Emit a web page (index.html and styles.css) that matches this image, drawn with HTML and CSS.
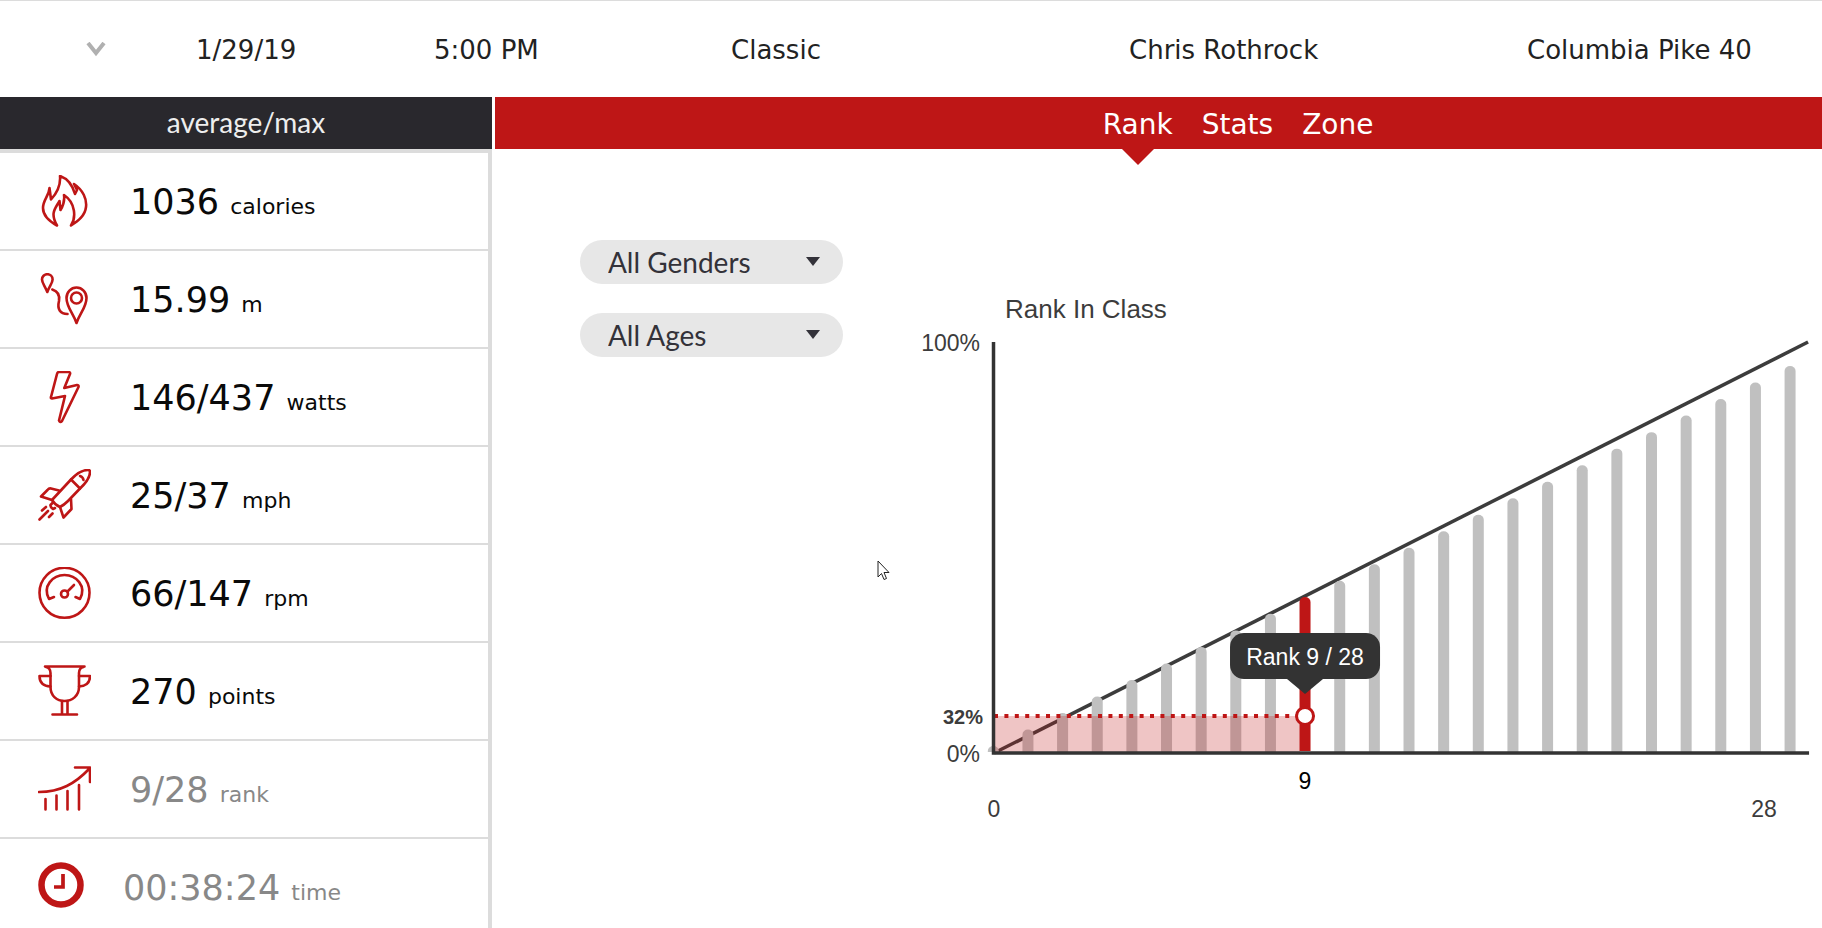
FILE: index.html
```
<!DOCTYPE html>
<html lang="en">
<head>
  <meta charset="UTF-8">
  <title>Class Results</title>
  <link rel="stylesheet" href="styles.css">
</head>
<body>
  <header class="class-info">
    <button class="toggle" aria-label="Collapse class">
      <svg width="20" height="16" viewBox="0 0 20 16"><path d="M2 1l8 10 8-10" /></svg>
    </button>
    <span>1/29/19</span>
    <span>5:00 PM</span>
    <span>Classic</span>
    <span>Chris Rothrock</span>
    <span>Columbia Pike 40</span>
  </header>

  <div class="layout">
    <aside class="sidebar">
      <h2 class="sidebar-title">average/max</h2>
      <ul class="metrics">
        <li>
          <svg class="icon" width="53" height="53" viewBox="0 0 53 53">
            <path d="M22 1C31 4 35 12 37 19L39 15L36 9C45 15 49 24 48 32C47 41 40 46 33 50.5C38 43 38 28 26 20C27 27 25 31 22.5 35L21.5 26C17 34 12 38 19 50.5C9 45 5 40 5 33C5 25 11 21 11.5 13L13 24.5C18 19 23 12 22 1Z" />
          </svg>
          <p>1036 <span>calories</span></p>
        </li>
        <li>
          <svg class="icon" width="53" height="53" viewBox="0 0 53 53">
            <path d="M9.3 19C7 13 4 10 4 6.5A5.3 5.3 0 0 1 14.6 6.5C14.6 10 11.5 13 9.3 19Z" />
            <path d="M14.3 16.5C19 18 22 22 21 28C19 36 22 41 29.5 41" />
            <path d="M38.5 50C35 40 28.5 34 28.5 25A10 10.5 0 0 1 48.5 25C48.5 34 42 40 38.5 50Z" />
            <circle cx="38.5" cy="25" r="5.5" />
          </svg>
          <p>15.99 <span>m</span></p>
        </li>
        <li>
          <svg class="icon" width="53" height="53" viewBox="0 0 53 53">
            <path d="M21 1H31Q32.5 1.5 32 3L26.3 17L39 14Q41 14 40.5 16L24 50Q22 52 21 49.5L27 25L14 27.5Q12.5 27.5 13 26L19 3Q19.5 1 21 1Z" />
          </svg>
          <p>146/437 <span>watts</span></p>
        </li>
        <li>
          <svg class="icon" width="53" height="53" viewBox="0 0 53 53">
            <path d="M14 31L33 10.5C40 3 45 1 50 1Q52 1 52 3C52 8 49 13 42 19.5L30 32Q26 36 22 38Q17 36 14 31Z" />
            <path d="M33 10.5L42 19.5M42 7Q45 8 45.5 11" />
            <path d="M21 21.5L13 19.5Q11 19 9.5 21L3 27.5L14 31M33 30L33.5 40L25.5 48.5L22 38" />
            <path d="M14.5 34L12.5 36Q12 38 15 40L17 39M10 42L1.5 50.5M8 38L4 41.5M14.5 44.5L11 48" />
          </svg>
          <p>25/37 <span>mph</span></p>
        </li>
        <li>
          <svg class="icon" width="53" height="53" viewBox="0 0 53 53">
            <circle cx="26.5" cy="25.8" r="25" />
            <path d="M16 30L11 32C4 19 15 8 26.5 8S49 19 42 32L37.5 30" />
            <circle cx="26.5" cy="27" r="3.5" />
            <path d="M29.5 24.5L36 18" />
          </svg>
          <p>66/147 <span>rpm</span></p>
        </li>
        <li>
          <svg class="icon" width="53" height="53" viewBox="0 0 53 53">
            <path d="M7 1.5H46.5M8 2Q12.5 3 12.5 8V22C12.5 31 19 36 26.5 36S41 31 41 22V8Q41 3 45.5 2" />
            <path d="M12.5 11H1.5C1.5 17 4 21 12.5 21.5M41 11H52C52 17 49 21 41 21.5" />
            <path d="M24 36V49M29.5 36V49M14.5 49.5H39" />
          </svg>
          <p>270 <span>points</span></p>
        </li>
        <li class="muted">
          <svg class="icon" width="53" height="53" viewBox="0 0 53 53">
            <path d="M1 29C22 29 37 21 52 5M37 4.5H52V19" />
            <path d="M7.5 36V46.5M18.5 32.5V46.5M29.5 28V46.5M41 22V46.5" />
          </svg>
          <p>9/28 <span>rank</span></p>
        </li>
        <li class="muted">
          <svg class="icon clock" width="46" height="50" viewBox="0 0 46 50">
            <circle cx="23" cy="23" r="19.5" />
            <path d="M25 12V25H16" />
          </svg>
          <p>00:38:24 <span>time</span></p>
        </li>
      </ul>
    </aside>

    <main>
      <nav class="tabs">
        <a href="#rank" class="active">Rank</a>
        <a href="#stats">Stats</a>
        <a href="#zone">Zone</a>
      </nav>

      <section class="content" id="rank">
        <form class="filters">
          <div class="dropdown">
            <select aria-label="Gender">
              <option>All Genders</option>
              <option>Female</option>
              <option>Male</option>
            </select>
          </div>
          <div class="dropdown">
            <select aria-label="Age">
              <option>All Ages</option>
              <option>20-29</option>
              <option>30-39</option>
            </select>
          </div>
        </form>

        <svg class="chart" viewBox="0 0 902 560">
          <text class="title" x="85" y="38">Rank In Class</text>
          <line class="trend" x1="74" y1="473" x2="888" y2="62" />
          <g id="bars"></g>
          <rect class="area" x="74" y="436" width="306" height="37" />
          <line class="dots" x1="74" y1="436" x2="376" y2="436" />
          <path class="axis" d="M73.5 62V473H889" />
          <path class="bar-active" d="M379.5 471V322a5.5 5 0 0 1 11 0V471Z" />
          <circle class="marker" cx="385" cy="436" r="8.5" />
          <path class="tip" d="M367 399H403L385 414Z" />
          <rect class="tip" x="310" y="353" width="150" height="46" rx="14" />
          <text class="tip-text" x="385" y="385" text-anchor="middle">Rank 9 / 28</text>
          <text x="60" y="71" text-anchor="end">100%</text>
          <text class="percent" x="63" y="444" text-anchor="end">32%</text>
          <text x="60" y="482" text-anchor="end">0%</text>
          <text class="current" x="385" y="509" text-anchor="middle">9</text>
          <text x="74" y="537" text-anchor="middle">0</text>
          <text x="844" y="537" text-anchor="middle">28</text>
        </svg>
      </section>
    </main>
  </div>

  <svg class="cursor" width="14" height="22" viewBox="0 0 14 22">
    <path d="M1 1V17L4.5 13.5L7 19.5L9.5 18.5L7 12.5H12Z" />
  </svg>

  <script>
    const bars = document.getElementById('bars');
    const total = 24;
    const current = 9;

    for (let i = 0; i < total; i++) {
      if (i === current) continue;
      const x = 73.3 + i * 34.64 - 5.5;
      const top = 466 - i * 16.52;
      const bar = document.createElementNS('http://www.w3.org/2000/svg', 'path');
      bar.setAttribute('d', `M${x} 472V${top + 5}a5.5 5 0 0 1 11 0V472Z`);
      bars.appendChild(bar);
    }
  </script>
</body>
</html>
```
FILE: styles.css
```
* {
  box-sizing: border-box;
}

body {
  display: flex;
  flex-direction: column;
  height: 100vh;
  margin: 0;
  overflow: hidden;
  background-color: #fff;
  color: #222;
  font-family: "DejaVu Sans", Verdana, sans-serif;
}

.class-info {
  display: grid;
  grid-template-columns: 110fr 238fr 297fr 398fr 398fr 295fr;
  align-items: center;
  flex: none;
  height: 97px;
  padding-left: 86px;
  padding-top: 2px;
  border-top: 1px solid #dcdcdc;
  font-size: 26px;
  white-space: nowrap;
}

.toggle {
  justify-self: start;
  display: flex;
  padding: 0;
  border: none;
  background: none;
  cursor: pointer;
}

.toggle path {
  fill: none;
  stroke: #b0b0b0;
  stroke-width: 4;
}

.layout {
  display: grid;
  grid-template-columns: 27% 1fr;
  column-gap: 3px;
}

.sidebar-title {
  height: 52px;
  margin: 0;
  background-color: #29282d;
  color: #eee;
  font-family: Lato, sans-serif;
  font-size: 28px;
  font-weight: 400;
  line-height: 50px;
  text-align: center;
}

.metrics {
  margin: 0;
  padding: 0;
  border-top: 4px solid #dcdcdc;
  border-right: 4px solid #dcdcdc;
  list-style: none;
}

.metrics li {
  display: flex;
  align-items: center;
  gap: 39px;
  height: 98px;
  padding-left: 38px;
  border-bottom: 2px solid #dcdcdc;
  color: #0a0a0a;
}

.metrics p {
  margin: 0;
  padding-top: 2px;
  font-size: 35px;
  white-space: nowrap;
}

.metrics span {
  font-size: 22px;
}

.metrics .muted {
  color: #888;
}

.icon {
  flex: none;
  fill: none;
  stroke: #be1616;
  stroke-width: 2.6;
  stroke-linecap: round;
  stroke-linejoin: round;
}

.clock circle {
  stroke-width: 6.5;
}

.clock path {
  stroke-width: 3.7;
  stroke-linecap: butt;
  stroke-linejoin: miter;
}

.tabs {
  display: flex;
  justify-content: center;
  gap: 29px;
  height: 52px;
  padding-left: 12%;
  background-color: #be1616;
  font-size: 28px;
  line-height: 56px;
}

.tabs a {
  position: relative;
  color: #fff;
  text-decoration: none;
}

.tabs .active::after {
  content: "";
  position: absolute;
  top: 100%;
  left: 50%;
  margin-left: -16px;
  border: 16px solid transparent;
  border-top-color: #be1616;
  border-bottom: none;
}

.content {
  display: flex;
  align-items: flex-start;
  gap: 77px;
  padding-top: 91px;
  padding-left: 85px;
}

.filters {
  display: flex;
  flex-direction: column;
  flex: none;
  gap: 29px;
  width: 263px;
}

.dropdown {
  position: relative;
}

.dropdown::after {
  content: "";
  position: absolute;
  top: 17px;
  right: 23px;
  border: 7px solid transparent;
  border-top: 9px solid #333239;
  border-bottom: none;
  pointer-events: none;
}

.dropdown select {
  display: block;
  width: 100%;
  height: 44px;
  padding: 0 28px;
  border: none;
  border-radius: 22px;
  background-color: #e7e7e7;
  color: #333239;
  font-family: Lato, sans-serif;
  font-size: 28px;
  appearance: none;
}

.chart {
  flex: 1;
  min-width: 0;
  margin-top: 40px;
  fill: #3c3c3c;
  font-family: "Liberation Sans", Arial, sans-serif;
  font-size: 23px;
}

.chart .title {
  font-size: 26px;
}

.chart .trend {
  stroke: #3c3c3c;
  stroke-width: 3.5;
}

#bars {
  fill: #c0c0c0;
}

.chart .area {
  fill: #be1616;
  fill-opacity: 0.25;
}

.chart .dots {
  stroke: #be1616;
  stroke-width: 4;
  stroke-dasharray: 4 6.4;
}

.chart .axis {
  fill: none;
  stroke: #333;
  stroke-width: 3.5;
}

.chart .bar-active {
  fill: #be1616;
}

.chart .marker {
  fill: #fff;
  stroke: #be1616;
  stroke-width: 3;
}

.chart .tip {
  fill: #333;
}

.chart .tip-text {
  fill: #fff;
}

.chart .percent {
  font-size: 20px;
  font-weight: bold;
}

.chart .current {
  fill: #000;
}

.cursor {
  position: absolute;
  top: 560px;
  left: 877px;
  fill: #fff;
  stroke: #222;
}
```
